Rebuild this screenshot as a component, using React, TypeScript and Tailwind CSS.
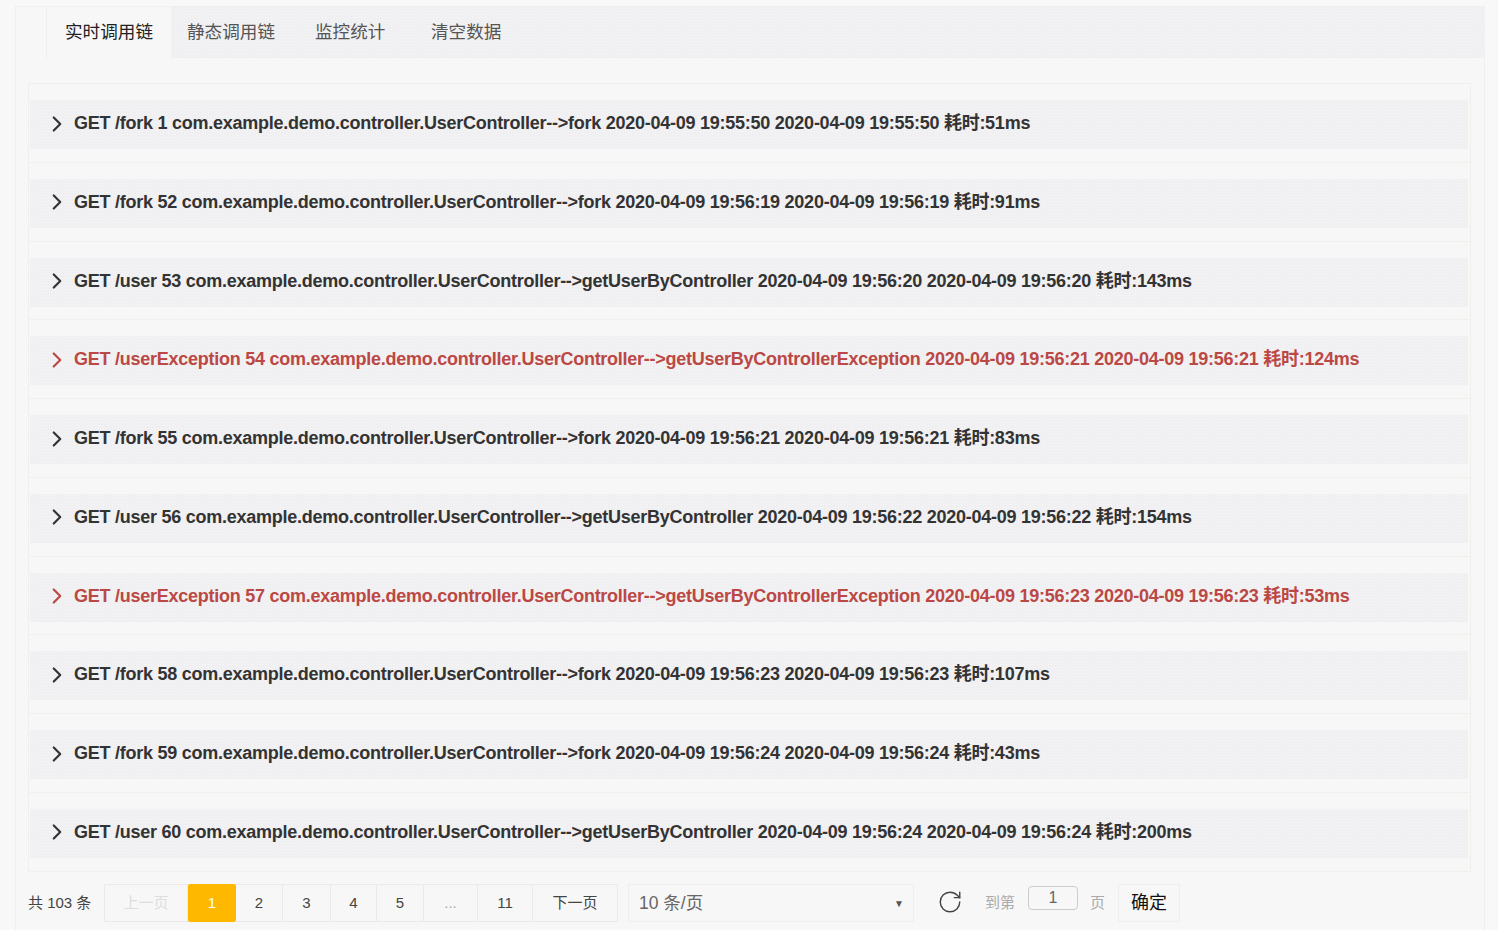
import React from "react";
import { ChevronRight, RotateCw } from "lucide-react";

const rows = [
  ["GET /fork 1 com.example.demo.controller.UserController-->fork 2020-04-09 19:55:50 2020-04-09 19:55:50 耗时:51ms", false],
  ["GET /fork 52 com.example.demo.controller.UserController-->fork 2020-04-09 19:56:19 2020-04-09 19:56:19 耗时:91ms", false],
  ["GET /user 53 com.example.demo.controller.UserController-->getUserByController 2020-04-09 19:56:20 2020-04-09 19:56:20 耗时:143ms", false],
  ["GET /userException 54 com.example.demo.controller.UserController-->getUserByControllerException 2020-04-09 19:56:21 2020-04-09 19:56:21 耗时:124ms", true],
  ["GET /fork 55 com.example.demo.controller.UserController-->fork 2020-04-09 19:56:21 2020-04-09 19:56:21 耗时:83ms", false],
  ["GET /user 56 com.example.demo.controller.UserController-->getUserByController 2020-04-09 19:56:22 2020-04-09 19:56:22 耗时:154ms", false],
  ["GET /userException 57 com.example.demo.controller.UserController-->getUserByControllerException 2020-04-09 19:56:23 2020-04-09 19:56:23 耗时:53ms", true],
  ["GET /fork 58 com.example.demo.controller.UserController-->fork 2020-04-09 19:56:23 2020-04-09 19:56:23 耗时:107ms", false],
  ["GET /fork 59 com.example.demo.controller.UserController-->fork 2020-04-09 19:56:24 2020-04-09 19:56:24 耗时:43ms", false],
  ["GET /user 60 com.example.demo.controller.UserController-->getUserByController 2020-04-09 19:56:24 2020-04-09 19:56:24 耗时:200ms", false],
] as const;

const pages = [
  { t: "2", w: "w-[47px]" },
  { t: "3", w: "w-[48px]" },
  { t: "4", w: "w-[46px]" },
  { t: "5", w: "w-[47px]" },
  { t: "...", w: "w-[54px]", c: "text-[#aaa]" },
  { t: "11", w: "w-[55px]" },
];

export default function App() {
  return (
    <div className="h-[930px] w-[1498px] overflow-hidden bg-[#f8f8f8] pt-[6px] pl-[15px] font-['Liberation_Sans','Noto_Sans_CJK_SC',sans-serif] text-[#333]">
      <div className="h-[924px] w-[1470px] border-x border-t border-[#efefef] bg-[#f7f7f7]">
        <div className="flex h-[51px] pl-[30px]">
          <div className="flex h-[51px] w-[125px] items-center justify-center border-l border-[#f1ede8] bg-[#f7f7f7] text-[17.6px] text-[#222]">实时调用链</div>
          <div className="flex h-[51px] flex-1 border-b border-[#f0eeec] bg-[#f0eff1] bg-[radial-gradient(#f6f6f6_0.6px,transparent_0.7px)] bg-[length:3px_3px]">
            <div className="flex h-[50px] w-[122px] items-center pl-[16px] text-[17.6px] text-[#555]">静态调用链</div>
            <div className="flex h-[50px] w-[116px] items-center pl-[22px] text-[17.6px] text-[#555]">监控统计</div>
            <div className="flex h-[50px] w-[100px] items-center pl-[22px] text-[17.6px] text-[#555]">清空数据</div>
          </div>
        </div>

        <div className="ml-[12px] mt-[25px] h-[789px] w-[1443px] border border-[#f1efeb]">
          {rows.map(([text, err], i) => (
            <div key={i} className="h-[78.75px] pt-[16px]">
              <div className="h-[62.75px] border-b border-[#f3efea]">
                <div className={`ml-[1px] flex h-[49px] w-[1438px] items-center bg-[#f0eff1] bg-[radial-gradient(#f6f6f6_0.6px,transparent_0.7px)] bg-[length:3px_3px] pb-[2px] pl-[14px] text-[18px] font-bold tracking-[-0.255px] ${err ? "text-[#bb4844]" : "text-[#333]"}`}>
                  <ChevronRight size={26} strokeWidth={2} className="mr-[4px] shrink-0" />
                  <span className="whitespace-nowrap">{text}</span>
                </div>
              </div>
            </div>
          ))}
        </div>

        <div className="ml-[12px] mt-[12px] flex h-[38px] items-center text-[15px]">
          <span className="w-[76px] text-[#444]">共 103 条</span>
          <div className="flex h-[38px] w-[84px] items-center justify-center border border-[#eaeaea] pt-[1px] text-[#ddd]">上一页</div>
          <div className="flex h-[38px] w-[48px] items-center justify-center rounded-[2px] bg-[#ffb800] pt-[1px] text-white">1</div>
          {pages.map((p) => (
            <div key={p.t} className={`flex h-[38px] ${p.w} items-center justify-center border-y border-r border-[#eaeaea] pt-[1px] ${p.c ?? "text-[#444]"}`}>{p.t}</div>
          ))}
          <div className="flex h-[38px] w-[85px] items-center justify-center border-y border-r border-[#eaeaea] pt-[1px] text-[#444]">下一页</div>
          <div className="ml-[10px] flex h-[38px] w-[286px] items-center justify-between border border-[#eeeeee] pl-[10px] pr-[9px] text-[17.5px] text-[#666]">
            <span>10 条/页</span>
            <span className="text-[10px] text-[#555]">▼</span>
          </div>
          <RotateCw size={26} strokeWidth={1.3} className="ml-[23px] -translate-y-[1px] text-[#444]" />
          <span className="ml-[22px] w-[43px] text-[#aaa]">到第</span>
          <div className="flex h-[24px] w-[50px] -translate-y-[5px] items-center justify-center rounded-[4px] border border-[#ccc] pb-[1px] text-[16px] text-[#666]">1</div>
          <span className="ml-[12px] w-[28px] text-[#aaa]">页</span>
          <div className="flex h-[38px] w-[62px] items-center justify-center border border-[#eeeeee] text-[18px] text-[#111]">确定</div>
        </div>
      </div>
    </div>
  );
}
